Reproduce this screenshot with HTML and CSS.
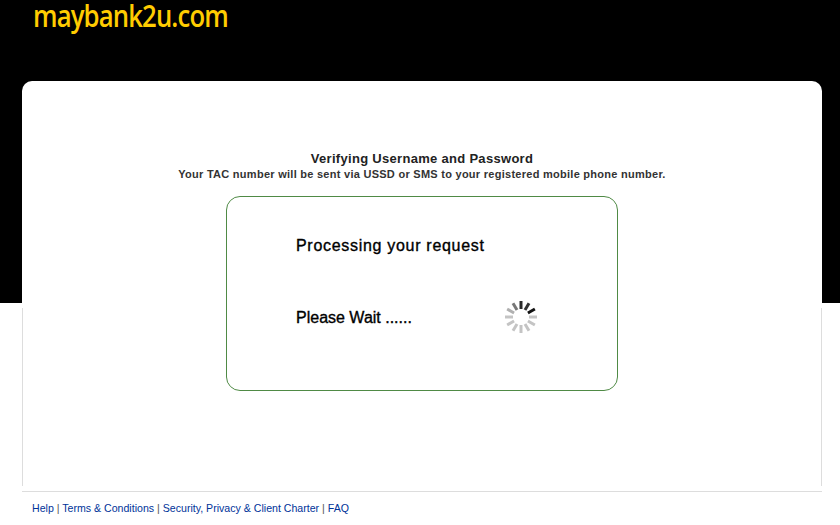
FILE: index.html
```html
<!DOCTYPE html>
<html lang="en">
<head>
<meta charset="utf-8">
<title>Maybank2u</title>
<link rel="stylesheet" href="styles.css">
</head>
<body>
<div class="page">
  <header class="header"><span class="logo">maybank2u.com</span></header>
  <main class="card">
    <h1 class="title">Verifying Username and Password</h1>
    <p class="subtitle">Your TAC number will be sent via USSD or SMS to your registered mobile phone number.</p>
    <section class="box">
      <p class="msg">Processing your request</p>
      <div class="wait">
        <p class="msg">Please Wait ......</p>
        <svg class="spinner" width="34" height="34" viewBox="-17 -17 34 34" aria-hidden="true">
          <g stroke-width="3" stroke-linecap="butt">
            <line x1="0" y1="-8" x2="0" y2="-16" stroke="#2a2a2a"/>
            <line x1="0" y1="-8" x2="0" y2="-16" stroke="#333" transform="rotate(30)"/>
            <line x1="0" y1="-8" x2="0" y2="-16" stroke="#111" transform="rotate(60)"/>
            <line x1="0" y1="-8" x2="0" y2="-16" stroke="#c4c4c4" transform="rotate(90)"/>
            <line x1="0" y1="-8" x2="0" y2="-16" stroke="#c4c4c4" transform="rotate(120)"/>
            <line x1="0" y1="-8" x2="0" y2="-16" stroke="#c4c4c4" transform="rotate(150)"/>
            <line x1="0" y1="-8" x2="0" y2="-16" stroke="#c4c4c4" transform="rotate(180)"/>
            <line x1="0" y1="-8" x2="0" y2="-16" stroke="#c4c4c4" transform="rotate(210)"/>
            <line x1="0" y1="-8" x2="0" y2="-16" stroke="#c4c4c4" transform="rotate(240)"/>
            <line x1="0" y1="-8" x2="0" y2="-16" stroke="#c4c4c4" transform="rotate(270)"/>
            <line x1="0" y1="-8" x2="0" y2="-16" stroke="#b0b0b0" transform="rotate(300)"/>
            <line x1="0" y1="-8" x2="0" y2="-16" stroke="#777" transform="rotate(330)"/>
          </g>
        </svg>
      </div>
    </section>
  </main>
  <footer class="footer">
    <a href="#">Help</a> | <a href="#">Terms &amp; Conditions</a> | <a href="#">Security, Privacy &amp; Client Charter</a> | <a href="#">FAQ</a>
  </footer>
</div>
</body>
</html>
```

FILE: styles.css
```css
html, body { margin: 0; padding: 0; background: #fff; }
body { font-family: "Liberation Sans", Arial, sans-serif; overflow: hidden; }
.page {
  width: 840px;
  height: 525px;
  padding: 0 18px 0 22px;
  box-sizing: border-box;
  background: linear-gradient(#000 303px, #fff 303px);
}
.header { height: 81px; }
.logo {
  display: block;
  width: 300px;
  margin-left: 11px;
  font-family: "Open Sans", sans-serif;
  font-weight: 600;
  font-size: 30px;
  line-height: 32px;
  letter-spacing: -1px;
  color: #fc0;
  transform: scaleX(0.856);
  transform-origin: left center;
}
.card {
  height: 405px;
  box-sizing: border-box;
  padding-top: 70px;
  display: flex;
  flex-direction: column;
  align-items: center;
  border-radius: 10px 10px 0 0;
  background-color: #fff;
  background-image: linear-gradient(#ddd, #ddd), linear-gradient(#ddd, #ddd);
  background-size: 1px 178px;
  background-position: left bottom, right bottom;
  background-repeat: no-repeat;
}
.title {
  margin: 0;
  font-size: 13px;
  line-height: 16px;
  font-weight: bold;
  color: #222;
  letter-spacing: 0.3px;
}
.subtitle {
  margin: 0;
  font-size: 11px;
  line-height: 14px;
  font-weight: bold;
  color: #333;
  letter-spacing: 0.27px;
}
.box {
  margin-top: 15px;
  width: 392px;
  height: 195px;
  box-sizing: border-box;
  padding: 40px 0 0 69px;
  border: 1px solid #4f8a45;
  border-radius: 14px;
}
.msg {
  margin: 0;
  font-size: 16px;
  line-height: 18px;
  color: #000;
  -webkit-text-stroke: 0.35px #000;
}
.box > .msg { letter-spacing: 0.7px; }
.wait {
  display: flex;
  align-items: center;
  gap: 92px;
  margin-top: 47px;
}
.spinner { flex: none; margin-top: -2px; }
.footer {
  margin-top: 5px;
  padding: 9px 0 0 10px;
  border-top: 1px solid #ddd;
  font-size: 10.6px;
  line-height: 14px;
  color: #555;
}
.footer a { color: #039; text-decoration: none; }
```
